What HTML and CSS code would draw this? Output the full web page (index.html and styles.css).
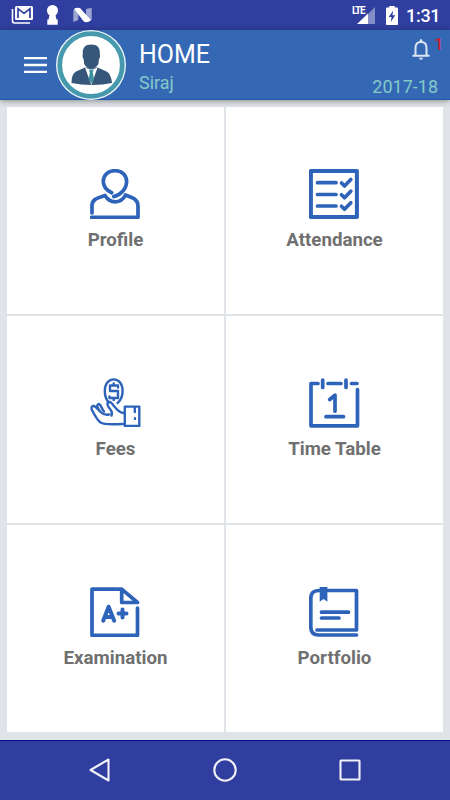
FILE: index.html
```
<!DOCTYPE html>
<html lang="en">
  <head>
    <meta charset="UTF-8" />
    <meta name="viewport" content="width=device-width, initial-scale=1.0" />
    <title>Home</title>
    <link rel="stylesheet" href="styles.css" />
  </head>
  <body>
    <div class="statusbar">
      <svg class="status-left" width="94" height="30" viewBox="0 0 94 30">
        <path d="M12.500 9v12q0 2 2 2H30" fill="none" stroke="#fff" stroke-width="1.600" />
        <rect x="15" y="6" width="18" height="14" rx="1.500" fill="#fff" />
        <path d="M18 18V8.700l6 4.800 6-4.800V18" fill="none" stroke="#303f9f" stroke-width="1.700" />
        <circle cx="52.500" cy="10.500" r="5.500" fill="#fff" />
        <path d="M50 13h5l1.500 6.500h1.200v5.200H47.300v-5.200h1.200z" fill="#fff" />
        <path d="M73.300 10l5-1.500v11.500l-5 2z" fill="#9ca5d3" />
        <path d="M86 9l5.700-1.200v12L86 21.500z" fill="#9ca5d3" />
        <path d="M74 8.700q3-1.700 6-.7L91 20.300q-3 2.700-7 1.500z" fill="#fff" />
      </svg>
      <span class="lte">LTE</span>
      <svg class="signal" width="19" height="17" viewBox="0 0 19 17">
        <path d="M1 17L18 0v17z" fill="#858dc7" />
        <path d="M0 17L11 6.500V17z" fill="#fff" />
      </svg>
      <svg class="battery" width="12" height="19" viewBox="0 0 13 19" preserveAspectRatio="none">
        <path d="M3.500 1.500V0h6v1.500H12q1 0 1 1V18q0 1-1 1H1q-1 0-1-1V2.500q0-1 1-1z" fill="#fff" />
        <path d="M7.800 4.500L3 11h3l-.8 5L10 9.300H7z" fill="#303f9f" />
      </svg>
      <span class="clock">1:31</span>
    </div>

    <header class="appbar">
      <svg class="menu" width="23" height="16" viewBox="0 0 23 16">
        <path d="M0 1.200h23M0 8h23M0 14.800h23" stroke="#fff" stroke-width="2.300" />
      </svg>
      <svg class="avatar" width="70" height="70" viewBox="0 0 70 70">
        <circle cx="35" cy="35" r="35" fill="#f4f8fa" />
        <circle cx="35" cy="35" r="31.300" fill="#fff" stroke="#479aae" stroke-width="4.800" />
        <path d="M15.500 53q0-9 4.500-11.500l9-4h12.500l9 4q4.500 2 5.500 11.500-9 2-20 2t-20.500-2z" fill="#36577a" />
        <path d="M29 37.500l6.300 17.500 6.300-17.500q-6.300 3-12.600 0z" fill="#fff" />
        <path d="M33 39.500h4.600l-.8 3 1.200 6.500-2.700 4.500-2.700-4.500 1.200-6.500z" fill="#3d91a1" />
        <path d="M35.300 14.500c6 0 9 3 8.500 9.500.5 1 .3 4-.8 5l-.6 5q-2.600 4.500-7.100 4.500t-7.100-4.500l-.6-5c-1.100-1-1.300-4-.8-5-.5-6.500 2.500-9.500 8.500-9.500z" fill="#36577a" />
      </svg>
      <div class="heading">
        <h1>HOME</h1>
        <p>Siraj</p>
      </div>
      <div class="session">
        <div class="alerts">
          <svg width="18" height="21" viewBox="0 0 18 21">
            <path d="M3.500 16V9q0-6 5.500-6t5.500 6v7M.5 16.700h17" fill="none" stroke="#dce5f2" stroke-width="2" />
            <path d="M7.700 3V1.500q0-1.500 1.300-1.500t1.300 1.500V3zM7 18.700h4q0 2-2 2t-2-2z" fill="#dce5f2" />
          </svg>
          <span class="count">1</span>
        </div>
        <span class="year">2017-18</span>
      </div>
    </header>

    <main class="grid">
      <a class="tile">
        <svg class="icon" viewBox="0 0 51 50">
          <path d="M21.700 23.700C17 21.500 13.300 18 13.300 12.500 13.300 6 18.300 1.700 25 1.700S36.600 6 36.600 12.500C36.600 20 30.500 26 23.800 27.600" />
          <path d="M2 44V36.500C2 30 8 28.800 15 26.500c2.500 4 5.500 6.300 10 6.300s8.500-2.800 10.500-6.800C42 28.500 48 30 48 37v11.300H1.500" />
        </svg>
        <span>Profile</span>
      </a>
      <a class="tile">
        <svg class="icon" viewBox="0 0 51 50">
          <path class="square" d="M1.900 2h46v46h-46z" />
          <path d="M8.500 13.700h18.500M8.500 25.500h18.500M8.500 37h18.500" />
          <path d="M32.500 14l3 3 6.300-6.500M32.500 25.700l3 3 6.300-6.500M32.500 37.300l3 3 6.300-6.500" />
        </svg>
        <span>Attendance</span>
      </a>
      <a class="tile">
        <svg class="icon fine" viewBox="0 0 51 50">
          <path d="M19 24.500C16.300 22 14.800 18 14.800 13 14.800 6 18.500 1.400 23.700 1.400S32.600 6 32.600 13c0 5-2 9.500-5 12" />
          <path d="M28 9.500V7.500H20v5.500h8v7h-8.500v-1.500M23.700 5.500v2M23.700 20v2" />
          <path d="M21.500 37.500c1-3 .5-4.500-1.500-6.500-2-2.500-3.500-5-2-7 2-1.500 3.500 1 5.500 3.500 3 3.500 5.500 7.500 10 7.500" />
          <path d="M19 36.500c-3 .5-6.500-.5-8.500-2.500C8 31.500 6 28.500 4 28c-2.500-.5-3 2-2 4 2.500 5 5 10 8.500 12.500 5 3 14.500 1.500 23 1.500" />
          <path d="M10 33c-3-3-3.500-6-1.500-7 2-.5 3 4.500 5.500 7.500" />
          <path d="M45 28.600H34.800v19.300h14.500V28.600h-4.500v5.500M45 40.300v.6" />
        </svg>
        <span>Fees</span>
      </a>
      <a class="tile">
        <svg class="icon" viewBox="0 0 51 50">
          <path d="M9 5.500H2v42.300h46.500V11.500M19 5.500h13M42.500 5.500h5.500M13.700 2v7.500M37 2v7.500" />
          <path d="M20.700 21.500l5.300-4.300v16M17 38.700h17.500" />
        </svg>
        <span>Time Table</span>
      </a>
      <a class="tile">
        <svg class="icon" viewBox="0 0 51 50">
          <path d="M47.500 21v27.300H2V2.200h29.700L47.500 15.500H31.700V2.500" />
          <path class="thick" d="M13.200 33.700l5.400-14 5.600 14M15.500 30h6.500M28.500 26.500h8M32.500 22.500v8" />
        </svg>
        <span>Examination</span>
      </a>
      <a class="tile">
        <svg class="icon" viewBox="0 0 51 50">
          <path d="M8 43h39.500V3.500h-38q-7.700 0-7.700 8V40q0 8 7.700 8h38" />
          <path d="M12.500 25.200h27M12.500 31h17.500" />
          <path class="solid" d="M10.700 0h7.700v14.700l-3.800-2.700-3.900 2.700z" />
        </svg>
        <span>Portfolio</span>
      </a>
    </main>

    <nav class="navbar">
      <svg width="22" height="26" viewBox="0 0 22 26">
        <path d="M1.500 13L19.500 2.500v21z" />
      </svg>
      <svg width="26" height="26" viewBox="0 0 26 26">
        <circle cx="13" cy="13" r="10.700" />
      </svg>
      <svg width="22" height="26" viewBox="0 0 22 26">
        <rect x="1.500" y="3.500" width="19" height="19" rx="0.500" />
      </svg>
    </nav>
  </body>
</html>
```
FILE: styles.css
```
* {
  box-sizing: border-box;
}

body {
  margin: 0;
  height: 800px;
  display: flex;
  flex-direction: column;
  font-family: Roboto, "Liberation Sans", sans-serif;
  background-color: #e0e4e8;
  overflow: hidden;
}

.statusbar {
  height: 30px;
  flex: none;
  display: flex;
  align-items: flex-start;
  background-color: #303f9f;
  color: #fff;
}

.status-left {
  flex: none;
}

.lte {
  width: 13px;
  margin: 5px 0 0 258px;
  font-size: 10px;
  line-height: 11px;
  font-weight: bold;
  letter-spacing: -1.3px;
}

.signal {
  margin: 7px 0 0 -8px;
}

.battery {
  margin: 6px 0 0 10px;
}

.clock {
  margin-left: 8px;
  font-size: 18px;
  font-weight: 500;
  line-height: 32px;
  letter-spacing: -0.3px;
}

.appbar {
  position: relative;
  height: 70px;
  flex: none;
  display: flex;
  align-items: center;
  padding-left: 23.5px;
  background-color: #3568b4;
  border-bottom: 1px solid #1d59a8;
  box-shadow: 0 1px 6px rgba(0, 0, 0, 0.4);
}

.menu {
  flex: none;
}

.avatar {
  flex: none;
  margin-left: 9.5px;
}

.heading {
  align-self: flex-start;
  margin-left: 13px;
  padding-top: 9px;
}

.heading h1 {
  margin: 0;
  color: #fff;
  font-size: 25px;
  font-weight: normal;
  line-height: 32px;
}

.heading p {
  margin: 1px 0 0;
  color: #84c9c9;
  font-size: 18px;
  line-height: 22px;
}

.session {
  align-self: stretch;
  margin-left: auto;
  padding: 8px 8px 0 0;
  display: flex;
  flex-direction: column;
  align-items: flex-end;
}

.alerts {
  display: flex;
  gap: 4px;
  height: 38px;
  padding-top: 1px;
}

.count {
  width: 8px;
  margin: -4px 0 0;
  color: #e5121d;
  font-size: 17px;
  line-height: 19px;
}

.year {
  margin-right: 4px;
  color: #84c9c9;
  font-size: 18px;
  line-height: 22px;
}

.grid {
  flex: 1;
  display: grid;
  grid-template-columns: 1fr 1fr;
  grid-template-rows: repeat(3, 1fr);
  gap: 2px;
  padding: 7px 7px 8px;
}

.tile {
  display: flex;
  flex-direction: column;
  align-items: center;
  padding-top: 62px;
  background-color: #fff;
  color: #707070;
  font-size: 18.7px;
  font-weight: bold;
  line-height: 22px;
}

.tile span {
  margin-top: 10px;
}

.icon {
  width: 51px;
  height: 50px;
  flex: none;
  fill: none;
  stroke: #2d63b8;
  stroke-width: 3.7;
  stroke-linecap: round;
  stroke-linejoin: round;
}

.icon.fine {
  stroke-width: 2.4;
}

.icon .square {
  stroke-width: 4;
}

.icon .thick {
  stroke-width: 4;
}

.icon .solid {
  fill: #2d63b8;
  stroke: none;
}

.navbar {
  height: 60px;
  flex: none;
  display: flex;
  align-items: center;
  justify-content: space-between;
  padding: 0 89px 1px;
  background-color: #303f9f;
  border-top: 1px solid #000c8a;
}

.navbar svg {
  fill: none;
  stroke: #f0f0f8;
  stroke-width: 2.1;
  stroke-linejoin: round;
}
```
